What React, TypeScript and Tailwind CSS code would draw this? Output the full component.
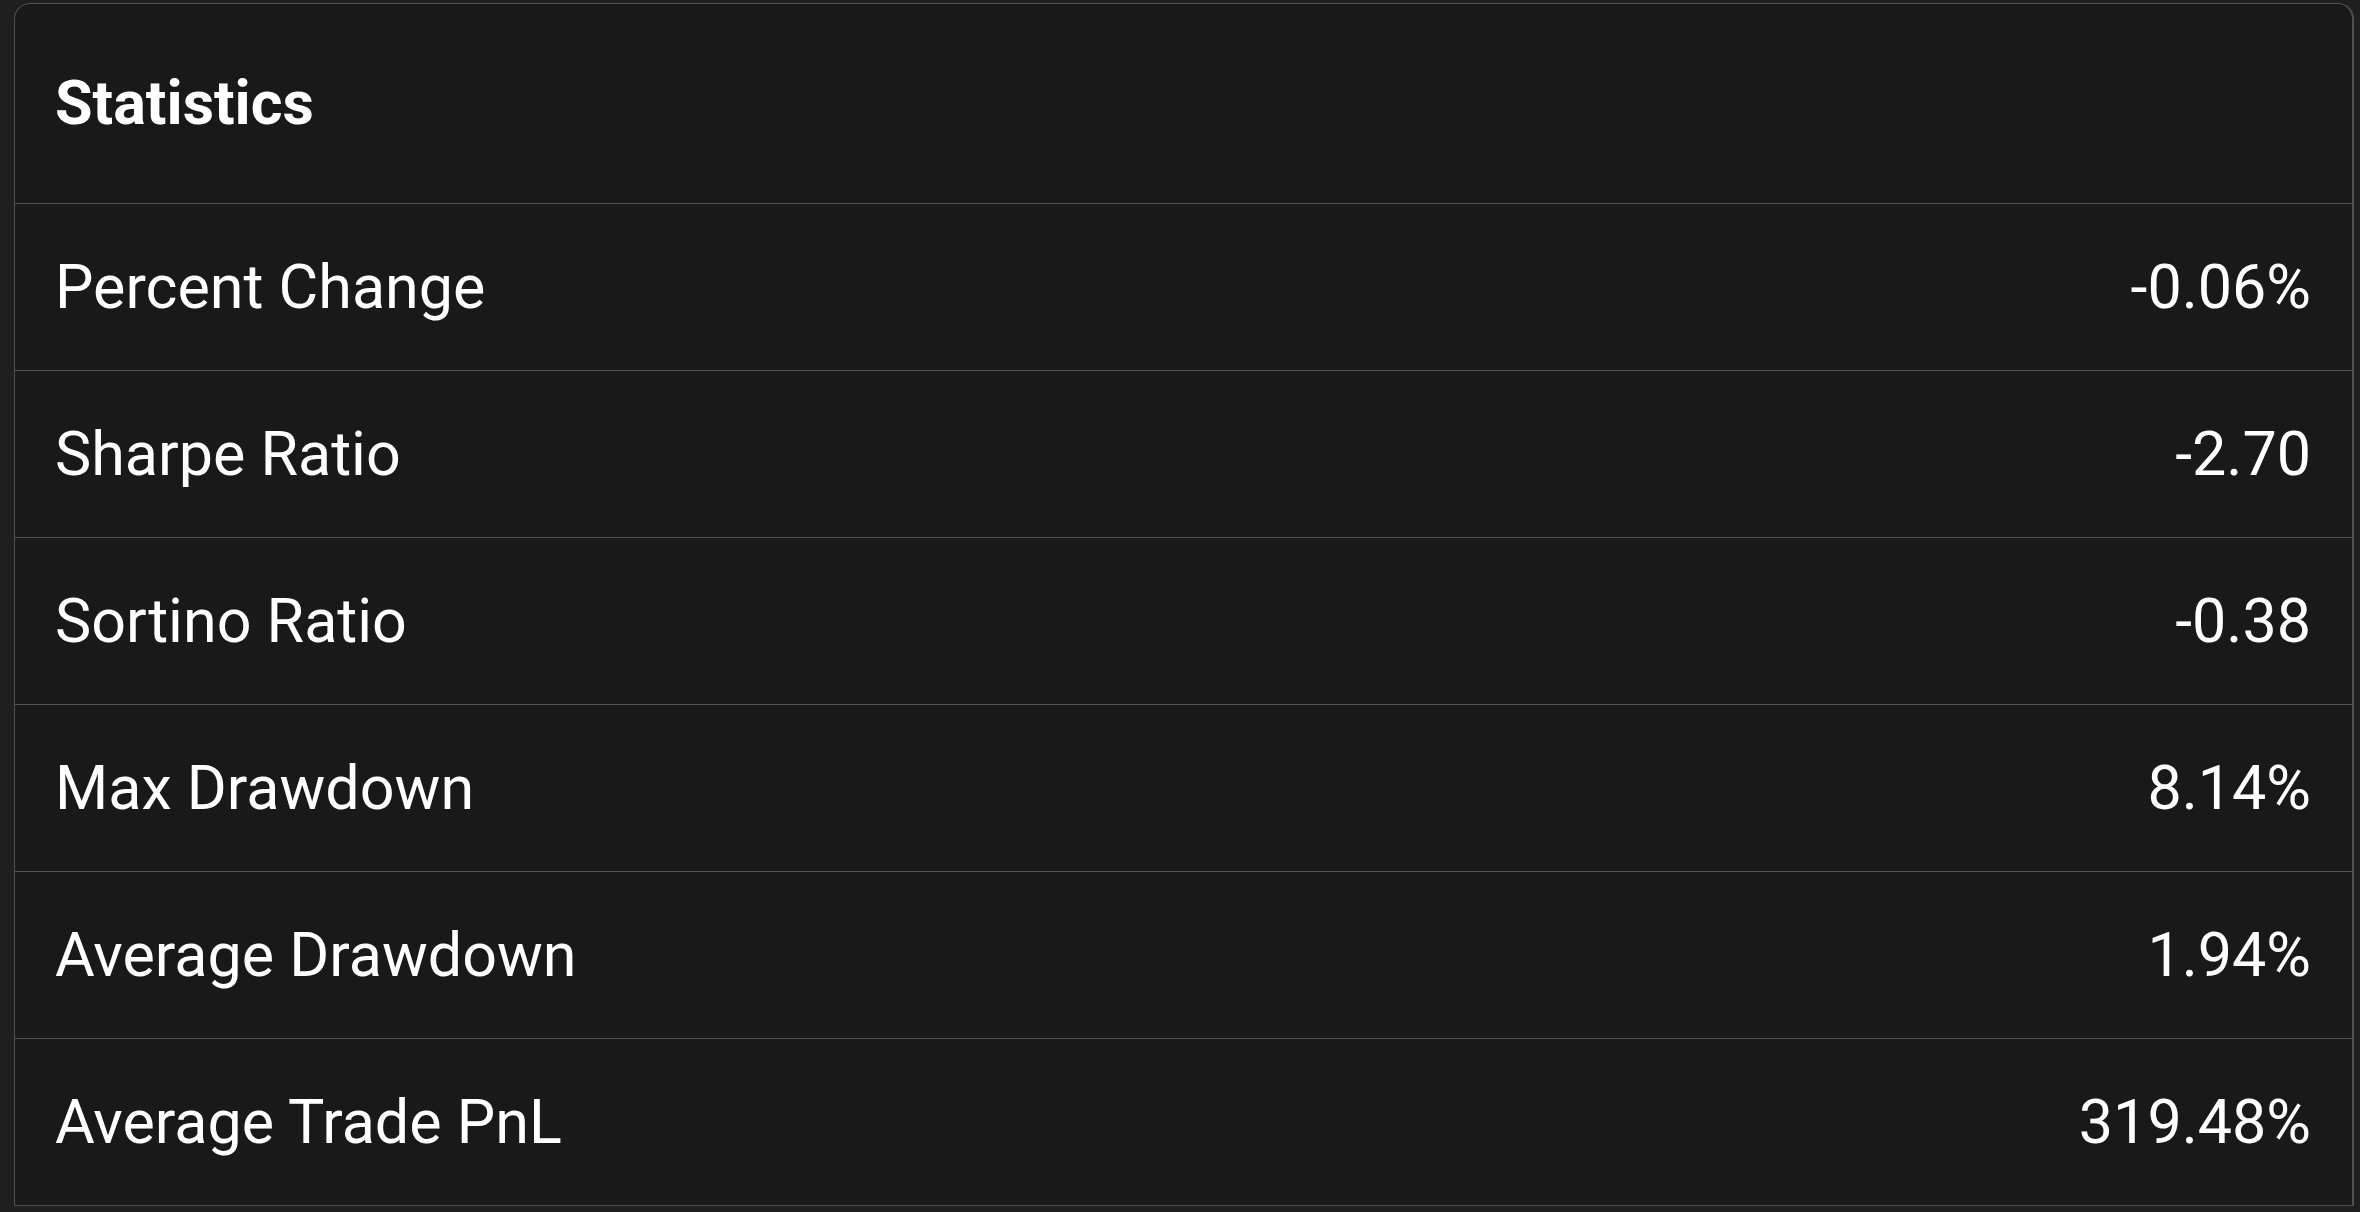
import React from "react";

const rows: { label: string; value: string }[] = [
  { label: "Percent Change", value: "-0.06%" },
  { label: "Sharpe Ratio", value: "-2.70" },
  { label: "Sortino Ratio", value: "-0.38" },
  { label: "Max Drawdown", value: "8.14%" },
  { label: "Average Drawdown", value: "1.94%" },
  { label: "Average Trade PnL", value: "319.48%" },
];

export default function App() {
  return (
    <div
      className="min-h-screen w-full bg-[#1f1f1f] pl-[14px] pr-[6px] pt-[3px] text-white"
      style={{ fontFamily: "Roboto, 'Noto Sans', sans-serif" }}
    >
      <div className="rounded-t-[16px] border-t border-l border-r-2 border-[#505050] bg-[#191919]">
        <div className="flex h-[200px] items-center border-b border-[#505050] pl-[40px] pr-[41px]">
          <h2 className="text-[61px] font-bold leading-none tracking-normal">Statistics</h2>
        </div>
        {rows.map((r) => (
          <div
            key={r.label}
            className="flex h-[167px] items-center justify-between border-b border-[#505050] pl-[40px] pr-[41px] text-[61px] leading-none"
          >
            <span>{r.label}</span>
            <span>{r.value}</span>
          </div>
        ))}
      </div>
    </div>
  );
}
